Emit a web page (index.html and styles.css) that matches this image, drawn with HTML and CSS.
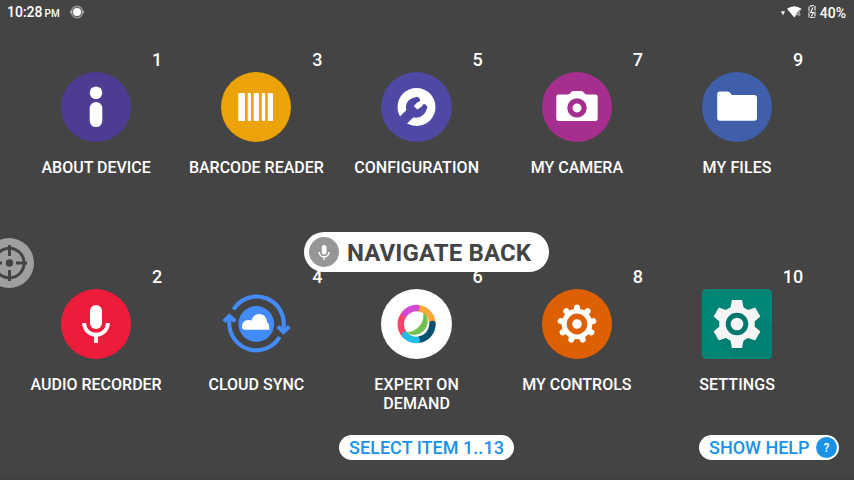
FILE: index.html
```html
<!DOCTYPE html>
<html lang="en">
<head>
<meta charset="utf-8">
<title>Home</title>
<link rel="stylesheet" href="styles.css">
</head>
<body>
<div class="screen">
  <header class="status">
    <div class="clock">10:28<span class="ampm">PM</span></div>
    <svg class="rec" width="16" height="16" viewBox="0 0 16 16"><circle cx="8" cy="8" r="5.800" fill="#666" stroke="#999" stroke-width="1.300"/><path d="M.8 8h2.500M12.700 8h2.500" stroke="#bbb" stroke-width="1.500"/><circle cx="8" cy="8" r="4" fill="#fff"/></svg>
    <div class="tray">
      <svg width="36" height="16" viewBox="0 0 36 16"><path d="M1 7.300h4l-2 4z" fill="#fff"/><path d="M7 4.800Q14.300-.4 21.500 4.800L14.300 13.500z" fill="#fff"/><path d="M19.300 6l-2.800 4.500h4M19.300 6v6" fill="none" stroke="#999" stroke-width="1.300"/><path d="M30 2.500h1v-1h3v1h1V13.500H29V2.500z" fill="none" stroke="#ddd" stroke-width="1.200" stroke-dasharray="5 1"/><path d="M33 3.500l-2.300 5h2.800l-2.300 4" fill="none" stroke="#fff" stroke-width="1.100"/></svg>
      <span class="battery">40%</span>
    </div>
  </header>

  <main class="grid">
    <div class="tile"><span class="num">1</span>
      <svg class="icon" viewBox="0 0 70 70"><circle cx="35" cy="35" r="35" fill="#4e3b93"/><circle cx="35" cy="20.700" r="6.300" fill="#fff"/><rect x="28.700" y="30" width="12.600" height="25" rx="6.300" fill="#fff"/></svg>
      <span class="label">ABOUT DEVICE</span></div>
    <div class="tile"><span class="num">3</span>
      <svg class="icon" viewBox="0 0 70 70"><circle cx="35" cy="35" r="35" fill="#eba307"/><g fill="#fff"><rect x="17.300" y="21" width="6.700" height="28" rx=".7"/><rect x="26.700" y="21" width="3.300" height="28" rx=".7"/><rect x="32.700" y="21" width="5.200" height="28" rx=".7"/><rect x="40.800" y="21" width="3.300" height="28" rx=".7"/><rect x="46.700" y="21" width="5.300" height="28" rx=".7"/></g></svg>
      <span class="label">BARCODE READER</span></div>
    <div class="tile"><span class="num">5</span>
      <svg class="icon wide" viewBox="0 0 71 70"><ellipse cx="35.500" cy="35" rx="35.500" ry="35" fill="#4f48a5"/><circle cx="35.500" cy="35" r="19" fill="#fff"/><path d="M36 25.200A10.300 10.300 0 1 0 45.500 35.500L43 33L36.300 37.300L33 34L38.500 28.500z" fill="#4f48a5"/><path d="M32 38.500L18.500 52" stroke="#4f48a5" stroke-width="10"/><path d="M33 34L38.200 28.800L42.200 32.800L36.600 37.600z" fill="#fff"/><path d="M36 26.700L37.300 28M43.200 34L44.500 35.300" stroke="#4f48a5" stroke-width="3.800" stroke-linecap="round"/></svg>
      <span class="label config">CONFIGURATION</span></div>
    <div class="tile"><span class="num">7</span>
      <svg class="icon" viewBox="0 0 70 70"><circle cx="35" cy="35" r="35" fill="#a62e8e"/><path d="M16.500 22.500H26Q27.500 22.500 28.500 20.700Q29.500 19 31.200 19H39.200Q41 19 42 20.700Q43 22.500 44.500 22.500H53.500Q55.700 22.500 55.700 24.700V46.800Q55.700 49 53.500 49H16.500Q14.300 49 14.300 46.800V24.700Q14.300 22.500 16.500 22.500z" fill="#fff"/><circle cx="35" cy="35.900" r="7.100" fill="#fff" stroke="#a62e8e" stroke-width="5.200"/></svg>
      <span class="label">MY CAMERA</span></div>
    <div class="tile"><span class="num">9</span>
      <svg class="icon" viewBox="0 0 70 70"><circle cx="35" cy="35" r="35" fill="#405faa"/><path d="M17.500 19.500H25.500Q27.200 19.500 28.300 21L29.800 23H52.200Q55 23 55 25.800V46Q55 48.800 52.200 48.800H18Q15.200 48.800 15.200 46V22Q15.200 19.500 17.500 19.500z" fill="#fff"/></svg>
      <span class="label files">MY FILES</span></div>

    <div class="tile"><span class="num">2</span>
      <svg class="icon" viewBox="0 0 70 70"><circle cx="35" cy="35" r="35" fill="#ee1c3b"/><rect x="29" y="16" width="12" height="24" rx="6" fill="#fff"/><path d="M23.100 34a11.900 11.700 0 0 0 23.800 0M35 45v9" fill="none" stroke="#fff" stroke-width="3.800"/></svg>
      <span class="label">AUDIO RECORDER</span></div>
    <div class="tile"><span class="num">4</span>
      <svg class="icon over" viewBox="0 0 70 70"><g fill="none" stroke="#428bf8" stroke-width="4.100"><path d="M12.500 20.500A27.100 27.100 0 0 1 62.300 39.500V42"/><path d="M8.300 29V33A27.100 27.100 0 0 0 58.700 48"/><path d="M56.800 37.500L62.500 43L68.200 37.500M2.800 32.500L8.400 27L14.300 32.500"/></g><circle cx="35.300" cy="35" r="17.900" fill="#428bf8"/><path d="M24 40.700Q21 40.700 21 37.700Q21 31.500 27.500 31Q29 31 30.500 31.500Q32.500 25 38 25Q45 25 46 33Q48.300 34.500 48.300 38V40.700z" fill="#fff"/></svg>
      <span class="label">CLOUD SYNC</span></div>
    <div class="tile"><span class="num">6</span>
      <svg class="icon wide" viewBox="0 0 71 70"><ellipse cx="35.500" cy="35" rx="35.500" ry="35" fill="#fff"/><g fill="none" stroke-width="6.400" stroke-linecap="round"><path d="M23.800 46A16 16 0 0 1 23.500 25" stroke="#fd426b"/><path d="M36 19A16 16 0 0 1 51.300 33" stroke="#f9a83a"/><path d="M24 24.500A16 16 0 0 1 35.500 19" stroke="#d349d4"/><path d="M51.500 35A16 16 0 0 1 38 50.700" stroke="#07516f"/><path d="M24 46A16 16 0 0 0 35.700 51" stroke="#1fbbe8"/></g><path d="M43.800 24.500A13.300 13.300 0 0 1 25.800 43.500Q32.500 43.500 37.700 38.200Q43.500 32 42.500 25.500z" fill="#71bf4e" stroke="#71bf4e" stroke-width=".6"/></svg>
      <span class="label expert">EXPERT ON DEMAND</span></div>
    <div class="tile"><span class="num">8</span>
      <svg class="icon" viewBox="0 0 70 70"><circle cx="35" cy="35" r="35" fill="#df6003"/><g stroke="#fff" stroke-width="6" stroke-linecap="round"><path id="t" d="M35 23V18.400"/><use href="#t" transform="rotate(40 35 35)"/><use href="#t" transform="rotate(80 35 35)"/><use href="#t" transform="rotate(120 35 35)"/><use href="#t" transform="rotate(160 35 35)"/><use href="#t" transform="rotate(200 35 35)"/><use href="#t" transform="rotate(240 35 35)"/><use href="#t" transform="rotate(280 35 35)"/><use href="#t" transform="rotate(320 35 35)"/></g><circle cx="35" cy="35" r="15.300" fill="#fff"/><circle cx="35" cy="35" r="7.600" fill="#fff" stroke="#df6003" stroke-width="5.600"/></svg>
      <span class="label">MY CONTROLS</span></div>
    <div class="tile"><span class="num">10</span>
      <svg class="icon" viewBox="0 0 70 70"><defs><g id="gear"><path id="c" d="M29.900 11H40.100L41.500 18.500L44 22H26L28.500 18.500z"/><use href="#c" transform="rotate(60 35 35)"/><use href="#c" transform="rotate(120 35 35)"/><use href="#c" transform="rotate(180 35 35)"/><use href="#c" transform="rotate(240 35 35)"/><use href="#c" transform="rotate(300 35 35)"/><circle cx="35" cy="35" r="17.800"/></g></defs><rect width="70" height="70" rx="4.500" fill="#018577"/><path d="M57 24L70 37V66Q70 70 66 70H33L18 55z" fill="#008073"/><use href="#gear" transform="translate(.5 1.300)" fill="#00685f" opacity=".35"/><use href="#gear" fill="#f5f5f5"/><circle cx="35" cy="35" r="8.800" fill="#f5f5f5" stroke="#007670" stroke-width="4.900"/></svg>
      <span class="label settings">SETTINGS</span></div>
  </main>

  <footer class="hints">
    <div class="pill select">SELECT ITEM 1..13</div>
    <div class="pill help">SHOW HELP<span class="q">?</span></div>
  </footer>
  <div class="edge"></div>

  <svg class="target" width="50" height="50" viewBox="0 0 50 50"><circle cx="25" cy="25" r="25" fill="#9f9f9f"/><g stroke="#444" fill="none" stroke-width="3"><circle cx="25.300" cy="25" r="14.800"/><path d="M25.500 7v11M25.500 32v11M7 25h11M32 25h11"/></g><circle cx="25.500" cy="25" r="3.700" fill="#444"/></svg>
  <div class="navigate">
    <svg width="30" height="30" viewBox="0 0 30 30"><circle cx="15" cy="15" r="15" fill="#969696"/><rect x="12.800" y="8" width="4.700" height="9.500" rx="2.300" fill="#fff"/><path d="M10.200 15a4.900 4.800 0 0 0 9.800 0M15.100 19.800v3.200" fill="none" stroke="#fff" stroke-width="1.400"/></svg>
    <span class="command">NAVIGATE BACK</span>
  </div>
</div>
</body>
</html>
```
FILE: styles.css
```css
* { box-sizing: border-box; }
body { margin: 0; background: #444; color: #fff; font-family: Roboto, sans-serif; font-weight: 500; }
.screen { position: relative; display: flex; flex-direction: column; width: 854px; height: 480px; overflow: hidden; }
.status { display: flex; align-items: center; height: 24px; padding: 0 8px 0 7px; font-size: 14px; line-height: 24px; }
.clock { width: 62px; padding-top: 1px; white-space: nowrap; }
.ampm { margin-left: 2px; font-size: 10px; }
.tray { display: flex; align-items: center; gap: 4px; margin-left: auto; }
.battery { padding-top: 1px; }
.grid { display: grid; grid-template-columns: repeat(5, 160.25px); grid-template-rows: 217px 170px; padding: 24px 0 0 16px; }
.tile { display: flex; flex-direction: column; align-items: center; }
.num { align-self: flex-end; height: 24px; margin-right: 14px; font-size: 18px; line-height: 24px; }
.icon { display: block; width: 70px; height: 70px; flex: none; }
.icon.wide { width: 71px; }
.icon.over { overflow: visible; }
.label { width: 135px; margin-top: 16px; font-size: 16px; line-height: 19px; text-align: center; }
.label.config { letter-spacing: 0.08px; }
.label.expert, .label.settings, .label.files { letter-spacing: 0.1px; }
.hints { display: grid; grid-template-columns: 1fr 175px 1fr; padding-right: 15px; padding-left: 14px; height: 25px; }
.pill { display: flex; align-items: center; justify-content: center; height: 25px; border-radius: 13px; background: #fff; color: #1b92e8; font-size: 18px; white-space: nowrap; }
.select { grid-column: 2; letter-spacing: 0.03px; }
.help { justify-self: end; justify-content: space-between; width: 140px; padding: 0 2px 0 10px; }
.q { width: 21px; height: 21px; border-radius: 50%; background: #1b92e8; color: #fff; font-size: 12px; line-height: 22px; text-align: center; }
.edge { height: 3px; margin-top: auto; background: #413f40; }
.target { position: absolute; left: -16px; top: 238px; }
.navigate { position: absolute; left: 304px; top: 232px; display: flex; align-items: center; gap: 8px; width: 245px; height: 40px; padding-left: 5px; border-radius: 20px; background: #fff; color: #444; font-size: 24px; font-weight: 700; white-space: nowrap; }
.command { padding-top: 2px; letter-spacing: 0.12px; }
```
